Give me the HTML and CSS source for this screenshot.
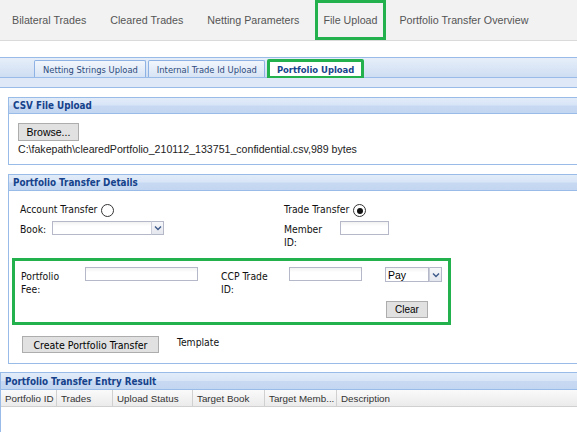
FILE: index.html
```html
<!DOCTYPE html>
<html>
<head>
<meta charset="utf-8">
<link rel="stylesheet" href="styles.css">
</head>
<body>
<nav class="topnav">
  <span class="navitem">Bilateral Trades</span>
  <span class="navitem">Cleared Trades</span>
  <span class="navitem">Netting Parameters</span>
  <span class="navitem active">File Upload</span>
  <span class="navitem">Portfolio Transfer Overview</span>
</nav>

<div class="subtabs">
  <div class="tabstrip">
    <span class="tab">Netting Strings Upload</span>
    <span class="tab">Internal Trade Id Upload</span>
    <span class="tab current">Portfolio Upload</span>
  </div>
  <div class="tabband"></div>
</div>

<section class="panel inset">
  <div class="phead">CSV File Upload</div>
  <div class="pbody csvbody">
    <button class="btn browse">Browse...</button>
    <div class="path">C:\fakepath\clearedPortfolio_210112_133751_confidential.csv,989 bytes</div>
  </div>
</section>

<section class="panel inset">
  <div class="phead">Portfolio Transfer Details</div>
  <div class="pbody detailbody">
    <div class="formgrid">
      <div class="cell"><span class="lbl">Account Transfer</span><span class="radio"></span></div>
      <div class="cell"><span class="lbl">Trade Transfer</span><span class="radio on"></span></div>
      <div class="cell"><span class="lbl book">Book:</span><span class="combo wbook"><span class="cfield"></span><span class="trigger"><svg viewBox="0 0 8 6" width="8" height="6"><path d="M1 1.5 L4 4.5 L7 1.5" fill="none" stroke="#3d5a8a" stroke-width="1.4"/></svg></span></span></div>
      <div class="cell"><span class="lbl member">Member ID:</span><span class="field wmember"></span></div>
    </div>

    <div class="greenbox">
      <div class="feerow">
        <span class="lbl fee">Portfolio Fee:</span>
        <span class="field wfee"></span>
        <span class="lbl ccp">CCP Trade ID:</span>
        <span class="field wccp"></span>
        <span class="combo wpay"><span class="cfield">Pay</span><span class="trigger"><svg viewBox="0 0 8 6" width="8" height="6"><path d="M1 1.5 L4 4.5 L7 1.5" fill="none" stroke="#3d5a8a" stroke-width="1.4"/></svg></span></span>
      </div>
      <div class="clearrow"><button class="btn clear">Clear</button></div>
    </div>

    <div class="actions">
      <button class="btn create">Create Portfolio Transfer</button>
      <span class="lbl template">Template</span>
    </div>
  </div>
</section>

<section class="panel result">
  <div class="phead">Portfolio Transfer Entry Result</div>
  <div class="gridhead">
    <span class="col c1">Portfolio ID</span>
    <span class="col c2">Trades</span>
    <span class="col c3">Upload Status</span>
    <span class="col c4">Target Book</span>
    <span class="col c5">Target Memb...</span>
    <span class="col c6">Description</span>
  </div>
  <div class="gridbody"></div>
</section>
</body>
</html>
```
FILE: styles.css
```css
html, body {
  margin: 0;
  padding: 0;
  background: #fff;
  overflow: hidden;
}
body {
  width: 577px;
  height: 432px;
  font-family: "DejaVu Sans Condensed", "DejaVu Sans", sans-serif;
  color: #111;
}

/* top navigation */
.topnav {
  display: flex;
  height: 41px;
  background: #f2f2f2;
  border-bottom: 1px solid #dadada;
  box-sizing: border-box;
}
.navitem {
  display: flex;
  align-items: center;
  padding: 0 12px;
  font-family: "Liberation Sans", Arial, sans-serif;
  font-size: 10.7px;
  color: #555;
}
.navitem.active {
  border: 3px solid #22b14c;
  padding: 0 6px 0 5px;
  margin: 0 1px 0 4px;
  height: 40px;
  box-sizing: border-box;
}

/* sub tabs */
.subtabs {
  margin-top: 16px;
}
.tabstrip {
  display: flex;
  align-items: flex-end;
  height: 19px;
  padding-left: 34px;
  border-top: 1px solid #99bbe8;
  border-bottom: 1px solid #99bbe8;
  background: linear-gradient(#e6eef9, #cfdef3);
  gap: 2px;
}
.tab {
  display: flex;
  align-items: center;
  height: 16px;
  padding: 0 7px 0 8px;
  border: 1px solid #8db2e3;
  border-bottom: none;
  border-radius: 2px 2px 0 0;
  background: linear-gradient(#f2f6fc, #d7e4f5);
  font-size: 9.3px;
  color: #2d4b7c;
}
.tab.current {
  height: 19px;
  box-sizing: border-box;
  border: 3px solid #22b14c;
  border-bottom-width: 2px;
  background: #fff;
  font-weight: bold;
  font-size: 9.4px;
  color: #15428b;
  padding: 0 7px;
  margin-bottom: -1px;
}
.tabband {
  height: 9px;
  background: #dee8f7;
  border-bottom: 1px solid #99bbe8;
}

/* panels */
.panel {
  border: 1px solid #99bbe8;
  border-right: none;
}
.inset {
  margin: 9px 0 0 8px;
}
.phead {
  height: 15px;
  display: flex;
  align-items: center;
  padding-left: 4px;
  background: linear-gradient(#e2ecf9 0%, #d8e5f7 48%, #c7d9f2 52%, #c3d6f1 100%);
  border-bottom: 1px solid #99bbe8;
  font-weight: bold;
  font-size: 9.8px;
  color: #15428b;
}
.pbody {
  background: #fff;
}

.btn {
  font-family: "Liberation Sans", Arial, sans-serif;
  background: #e1e1e1;
  border: 1px solid #adadad;
  color: #000;
  padding: 0;
  margin: 0;
  display: block;
}

.csvbody {
  padding: 9px 0 9px 9px;
  height: 32px;
}
.browse {
  width: 61px;
  height: 18px;
  font-size: 10.5px;
}
.path {
  margin-top: 2px;
  font-family: "Liberation Sans", Arial, sans-serif;
  font-size: 10.6px;
  color: #222;
  white-space: nowrap;
  line-height: 12px;
}

/* details */
.detailbody {
  padding: 12px 0 10px 3px;
}
.formgrid {
  display: grid;
  grid-template-columns: 264px auto;
  row-gap: 4px;
  padding-left: 8px;
}
.cell {
  display: flex;
  align-items: flex-start;
}
.lbl {
  font-size: 10.3px;
  line-height: 12.5px;
  color: #111;
}
.radio {
  width: 11px;
  height: 11px;
  border: 1px solid #333;
  border-radius: 50%;
  background: #fff;
  margin-left: 4px;
  margin-top: 1px;
  position: relative;
}
.radio.on::after {
  content: "";
  position: absolute;
  left: 2.5px;
  top: 2.5px;
  width: 6px;
  height: 6px;
  border-radius: 50%;
  background: #111;
}
.book {
  width: 32px;
  padding-top: 2px;
}
.member {
  width: 40px;
  padding-top: 2px;
  margin-right: 16px;
}
.field {
  display: block;
  height: 12px;
  border: 1px solid #b5b8c8;
  background: linear-gradient(#f2f2f2, #fff 35%);
}
.wmember { width: 47px; }
.combo {
  display: flex;
  height: 14px;
}
.cfield {
  flex: 1;
  border: 1px solid #b5b8c8;
  background: linear-gradient(#f2f2f2, #fff 35%);
  font-family: "Liberation Sans", Arial, sans-serif;
  font-size: 10.5px;
  line-height: 14px;
  padding-left: 2px;
  color: #000;
}
.trigger {
  width: 11px;
  border: 1px solid #b5b8c8;
  border-left-color: #c9cdd9;
  background: linear-gradient(#f6f7f9, #e4e7ee);
  display: flex;
  align-items: center;
  justify-content: center;
}
.wbook { width: 112px; }
.wbook .cfield { border-right: none; }

.greenbox {
  margin: 10px 0 0 0;
  width: 433px;
  border: 3px solid #22b14c;
  padding: 6px 0 0 0;
  height: 55px;
}
.feerow {
  display: flex;
  align-items: flex-start;
  padding-left: 6px;
  height: 26px;
}
.fee { width: 44px; margin-right: 20px; padding-top: 3px; }
.wfee { width: 111px; }
.ccp { width: 52px; padding-top: 3px; margin-left: 23px; margin-right: 16px; }
.wccp { width: 71px; }
.wpay { width: 57px; margin-left: 23px; height: 15px; }
.wpay .cfield { line-height: 15px; }
.clearrow {
  padding: 8px 0 0 371px;
}
.clear {
  width: 42px;
  height: 17px;
  font-size: 10px;
}

.actions {
  display: flex;
  align-items: flex-start;
  padding: 11px 0 0 10px;
}
.create {
  width: 137px;
  height: 17px;
  font-family: "DejaVu Sans Condensed", "DejaVu Sans", sans-serif;
  font-size: 10.5px;
}
.template {
  margin-left: 18px;
}

/* result grid */
.result {
  margin-top: 8px;
  height: 62px;
  border-bottom: none;
}
.result .phead {
  height: 16px;
}
.gridhead {
  display: flex;
  height: 16px;
  background: linear-gradient(#fafafa, #ebebeb);
  border-bottom: 1px solid #d0d0d0;
}
.col {
  display: flex;
  align-items: center;
  padding-left: 4px;
  border-right: 1px solid #d0d0d0;
  font-family: "Liberation Sans", Arial, sans-serif;
  font-size: 9.8px;
  color: #333;
  box-sizing: border-box;
  white-space: nowrap;
}
.c1 { width: 56px; }
.c2 { width: 56px; }
.c3 { width: 80px; }
.c4 { width: 72px; }
.c5 { width: 72px; }
.c6 { flex: 1; border-right: none; }
```
